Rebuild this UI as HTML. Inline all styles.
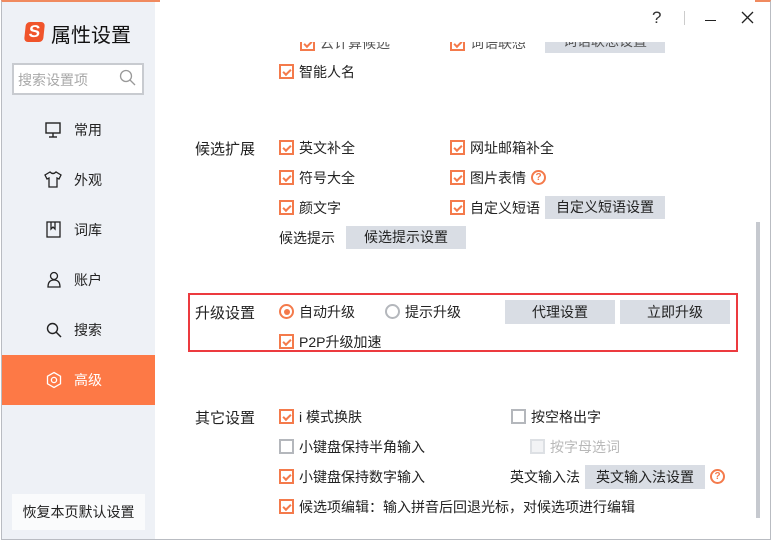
<!DOCTYPE html>
<html><head><meta charset="utf-8"><style>
*{margin:0;padding:0;box-sizing:border-box}
body{width:772px;height:542px;background:#fff;position:relative;overflow:hidden;font-family:"Liberation Sans","Noto Sans CJK SC",sans-serif;font-size:14px;color:#222}
.a{position:absolute;white-space:nowrap}
.win{position:absolute;left:1px;top:0;width:770px;height:540px;border:1px solid #b9bcc2;border-top:2px solid #f08a5f;background:#fff}
.side{position:absolute;left:2px;top:2px;width:153px;height:537px;background:#eef1f6}
.cb{position:absolute;width:15px;height:15px;border:2px solid #f47a4b;background:#fff}
.cb::after{content:"";position:absolute;left:2px;top:0px;width:6px;height:3px;border-left:2px solid #f47a4b;border-bottom:2px solid #f47a4b;transform:translate(0,3px) rotate(-45deg)}
.ub{position:absolute;width:15px;height:15px;border:2px solid #b4b7bc;background:#fff}
.dis{border-color:#dde0e4;background:#f2f3f5}
.btn{position:absolute;background:#d9dde4;text-align:center;font-size:14px;color:#222}
.q{position:absolute;width:15px;height:15px;border:2px solid #f47a4b;border-radius:50%;color:#f47a4b;font-size:10px;font-weight:bold;text-align:center;line-height:11px}
.menu{position:absolute;left:2px;width:153px;height:50px}
.menu span{position:absolute;left:72px;top:15px;font-size:14px}
</style></head><body>
<div class="win"></div>
<div class="side"></div>
<div class="a" style="left:25px;top:22px;width:19px;height:20px;background:#f0542b;border-radius:4px;transform:skew(-6deg);color:#fff;font-weight:bold;font-size:17px;text-align:center;line-height:20px">S</div>
<div class="a" style="left:51px;top:19px;font-size:20px;color:#111">属性设置</div>
<div class="a" style="left:12px;top:63px;width:132px;height:32px;border:2px solid #c8cbd0;background:#fff"></div>
<div class="a" style="left:18px;top:70px;font-size:14px;color:#a8a8a8">搜索设置项</div>
<svg class="a" style="left:119px;top:69px" width="18" height="18"><circle cx="7" cy="7" r="5.5" fill="none" stroke="#999" stroke-width="1.3"/><line x1="11" y1="11" x2="16" y2="16" stroke="#999" stroke-width="1.3"/></svg>
<div class="menu" style="top:105px"><svg class="a" style="left:43px;top:17px" width="16" height="16"><rect x="1" y="1" width="14" height="10" fill="none" stroke="#222" stroke-width="1.4"/><line x1="8" y1="11" x2="8" y2="15" stroke="#222" stroke-width="1.4"/><line x1="4" y1="15" x2="12" y2="15" stroke="#222" stroke-width="1.4"/></svg><span>常用</span></div>
<div class="menu" style="top:155px"><svg class="a" style="left:42px;top:16px" width="18" height="17"><path d="M6 1 L1 4 L3 8 L5 7 L5 16 L13 16 L13 7 L15 8 L17 4 L12 1 Q9 4 6 1Z" fill="none" stroke="#222" stroke-width="1.3"/></svg><span>外观</span></div>
<div class="menu" style="top:205px"><svg class="a" style="left:44px;top:16px" width="16" height="17"><rect x="1" y="1" width="13" height="15" fill="none" stroke="#222" stroke-width="1.3"/><path d="M5 1 V8 L7 6 L9 8 V1" fill="none" stroke="#222" stroke-width="1.3"/></svg><span>词库</span></div>
<div class="menu" style="top:255px"><svg class="a" style="left:44px;top:16px" width="16" height="17"><circle cx="8" cy="5" r="3.5" fill="none" stroke="#222" stroke-width="1.3"/><path d="M2 16 Q2 9 8 9 Q14 9 14 16 Z" fill="none" stroke="#222" stroke-width="1.3"/></svg><span>账户</span></div>
<div class="menu" style="top:305px"><svg class="a" style="left:44px;top:17px" width="16" height="16"><circle cx="6.5" cy="6.5" r="5" fill="none" stroke="#222" stroke-width="1.4"/><line x1="10" y1="10" x2="15" y2="15" stroke="#222" stroke-width="1.5"/></svg><span>搜索</span></div>
<div class="menu" style="top:355px;background:#fd7946;color:#fff"><svg class="a" style="left:43px;top:16px" width="18" height="18"><path d="M9 1.5 L15.5 5.2 L15.5 12.8 L9 16.5 L2.5 12.8 L2.5 5.2Z" fill="none" stroke="#fff" stroke-width="1.3"/><circle cx="9" cy="9" r="2.6" fill="none" stroke="#fff" stroke-width="1.3"/></svg><span>高级</span></div>
<div class="a" style="left:12px;top:494px;width:133px;height:36px;background:#fafbfc;text-align:center;line-height:36px;font-size:14px;color:#222">恢复本页默认设置</div>
<div class="cb" style="left:300px;top:36px"></div><div class="a" style="left:320px;top:33px;color:#555">云计算候选</div>
<div class="cb" style="left:450px;top:36px"></div><div class="a" style="left:470px;top:33px;color:#555">词语联想</div>
<div class="btn" style="left:545px;top:30px;width:120px;height:23px;line-height:23px;color:#555">词语联想设置</div>
<div class="a" style="left:160px;top:0;width:595px;height:42px;background:#fff"></div>
<div class="a" style="left:652px;top:8px;font-size:17px;color:#333">?</div>
<div class="a" style="left:684px;top:11px;width:1px;height:14px;background:#ccc"></div>
<div class="a" style="left:705px;top:20px;width:11px;height:1px;background:#222"></div>
<svg class="a" style="left:741px;top:11px" width="13" height="13"><path d="M1 1L12 12M12 1L1 12" stroke="#222" stroke-width="1.3"/></svg>
<div class="cb" style="left:279px;top:64px"></div><div class="a" style="left:299px;top:62px">智能人名</div>
<div class="a" style="left:195px;top:138px;font-size:15px">候选扩展</div>
<div class="cb" style="left:279px;top:140px"></div><div class="a" style="left:299px;top:138px">英文补全</div>
<div class="cb" style="left:450px;top:140px"></div><div class="a" style="left:470px;top:138px">网址邮箱补全</div>
<div class="cb" style="left:279px;top:170px"></div><div class="a" style="left:299px;top:168px">符号大全</div>
<div class="cb" style="left:450px;top:170px"></div><div class="a" style="left:470px;top:168px">图片表情</div>
<div class="q" style="left:531px;top:170px">?</div>
<div class="cb" style="left:279px;top:200px"></div><div class="a" style="left:299px;top:198px">颜文字</div>
<div class="cb" style="left:450px;top:200px"></div><div class="a" style="left:470px;top:198px">自定义短语</div>
<div class="btn" style="left:545px;top:196px;width:120px;height:23px;line-height:23px">自定义短语设置</div>
<div class="a" style="left:279px;top:228px">候选提示</div>
<div class="btn" style="left:346px;top:226px;width:120px;height:23px;line-height:23px">候选提示设置</div>
<div class="a" style="left:188px;top:293px;width:550px;height:59px;border:2px solid #ec3a3f"></div>
<div class="a" style="left:195px;top:302px;font-size:15px">升级设置</div>
<div class="a" style="left:279px;top:304px;width:15px;height:15px;border:2px solid #f47a4b;border-radius:50%"><div style="position:absolute;left:2.5px;top:2.5px;width:6px;height:6px;border-radius:50%;background:#f47a4b"></div></div>
<div class="a" style="left:299px;top:302px">自动升级</div>
<div class="a" style="left:385px;top:304px;width:15px;height:15px;border:2px solid #b4b7bc;border-radius:50%"></div>
<div class="a" style="left:405px;top:302px">提示升级</div>
<div class="btn" style="left:505px;top:300px;width:110px;height:24px;line-height:24px">代理设置</div>
<div class="btn" style="left:620px;top:300px;width:110px;height:24px;line-height:24px">立即升级</div>
<div class="cb" style="left:279px;top:334px"></div><div class="a" style="left:299px;top:332px">P2P升级加速</div>
<div class="a" style="left:195px;top:407px;font-size:15px">其它设置</div>
<div class="cb" style="left:279px;top:409px"></div><div class="a" style="left:299px;top:407px">i 模式换肤</div>
<div class="ub" style="left:511px;top:409px"></div><div class="a" style="left:531px;top:407px">按空格出字</div>
<div class="ub" style="left:279px;top:439px"></div><div class="a" style="left:299px;top:437px">小键盘保持半角输入</div>
<div class="ub dis" style="left:530px;top:439px"></div><div class="a" style="left:550px;top:437px;color:#b8b8b8">按字母选词</div>
<div class="cb" style="left:279px;top:469px"></div><div class="a" style="left:299px;top:467px">小键盘保持数字输入</div>
<div class="a" style="left:510px;top:467px">英文输入法</div>
<div class="btn" style="left:585px;top:465px;width:120px;height:24px;line-height:24px">英文输入法设置</div>
<div class="q" style="left:710px;top:469px">?</div>
<div class="cb" style="left:279px;top:499px"></div><div class="a" style="left:299px;top:497px">候选项编辑：输入拼音后回退光标，对候选项进行编辑</div>
<div class="a" style="left:756px;top:222px;width:4px;height:296px;background:#c6c9cf"></div>
</body></html>
